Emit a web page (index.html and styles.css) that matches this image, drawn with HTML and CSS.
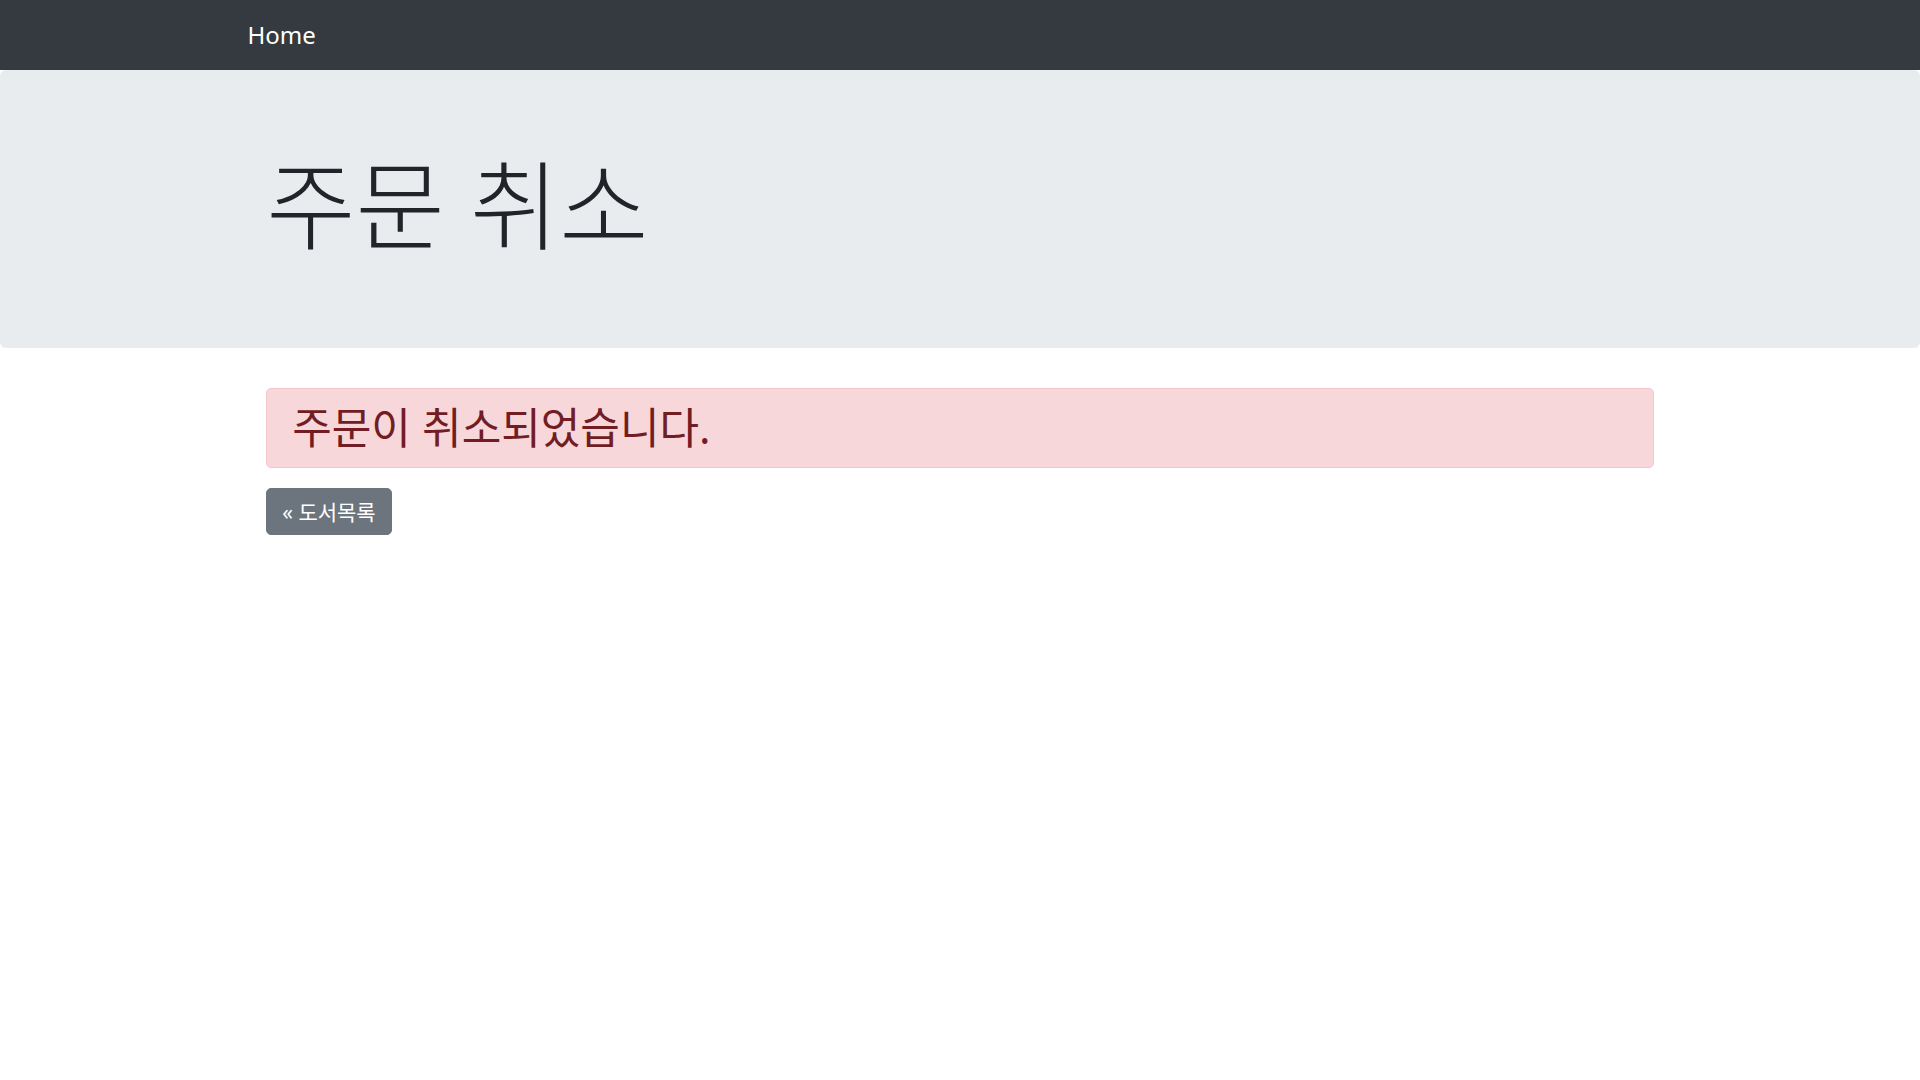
FILE: index.html
```html
<!DOCTYPE html>
<html lang="ko">
<head>
    <meta charset="UTF-8">
    <meta name="viewport" content="width=device-width, initial-scale=1.0">
    <title>주문 취소</title>
    <link rel="stylesheet" href="styles.css">
</head>
<body>

<nav class="navbar">
    <div class="nav-container">
        <a class="navbar-brand" href="#">Home</a>
    </div>
</nav>

<div class="jumbotron">
    <div class="container">
        <h1 class="display-3">주문 취소</h1>
    </div>
</div>

<div class="container">
    <div class="alert alert-danger">
        <h2 class="alert-text">주문이 취소되었습니다.</h2>
    </div>
    <a href="#" class="btn btn-secondary">&laquo; 도서목록</a>
</div>

</body>
</html>
```

FILE: styles.css
```css
body {
    font-family: "Noto Sans", "Noto Sans CJK KR", sans-serif;
    font-size: 20px;
    line-height: 1.5;
    color: #212529;
    background-color: #fff;
    margin: 0;
    padding: 0;
}
a {
    text-decoration: none;
}
.navbar {
    background-color: #343a40;
    padding: 10px 20px;
}
.nav-container {
    max-width: 1425px;
    margin: 0 auto;
    display: flex;
    align-items: center;
}
.navbar-brand {
    color: #fff;
    font-size: 24px;
    line-height: 37.5px;
    padding: 6.25px 0;
}
.container {
    max-width: 1425px;
    box-sizing: border-box;
    padding: 0 18.75px;
    margin: 0 auto;
}
.jumbotron {
    background-color: #e9ecef;
    padding: 80px 40px;
    margin-bottom: 40px;
    border-radius: 6px;
}
.display-3 {
    font-size: 97px;
    font-weight: 300;
    line-height: 108px;
    margin: 0 0 10px 0;
}
.alert {
    border: 1px solid transparent;
    border-radius: 5px;
    padding: 15px 25px;
    margin-bottom: 20px;
}
.alert-danger {
    color: #721c24;
    background-color: #f8d7da;
    border-color: #f5c6cb;
}
.alert-text {
    font-size: 43px;
    font-weight: 400;
    line-height: 48px;
    margin: 0;
}
.btn {
    display: inline-block;
    font-size: 21px;
    line-height: 30px;
    padding: 7.5px 15px;
    border: 1px solid transparent;
    border-radius: 5px;
}
.btn-secondary {
    color: #fff;
    background-color: #6c757d;
    border-color: #6c757d;
}
.btn-secondary:hover {
    background-color: #5a6268;
}
```
